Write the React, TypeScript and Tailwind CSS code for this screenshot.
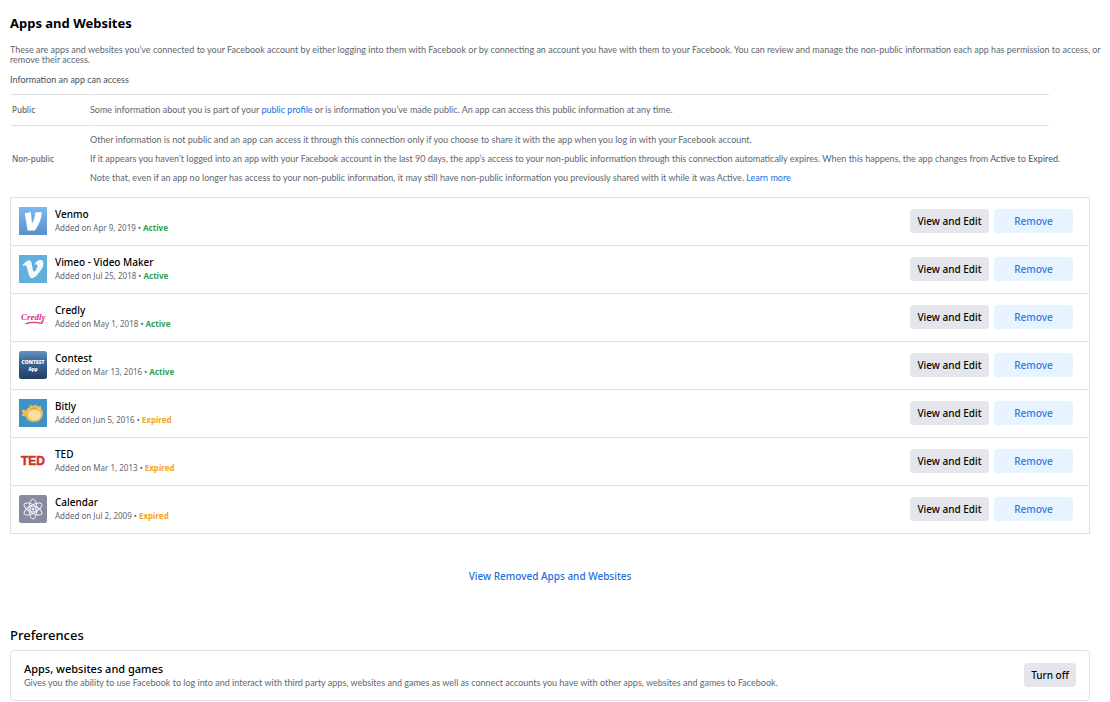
import type { ReactNode } from "react";
import { FaVimeoV } from "react-icons/fa";

interface ConnectedApp {
  name: string;
  added: string;
  status: "Active" | "Expired";
  icon: ReactNode;
}

function VenmoIcon() {
  return (
    <svg viewBox="0 0 28 28" className="size-7" aria-hidden="true">
      <defs>
        <linearGradient id="venmo" x1="0" y1="0" x2="0" y2="1">
          <stop offset="0" stopColor="#7fb8ea" />
          <stop offset="1" stopColor="#5b8fcb" />
        </linearGradient>
      </defs>
      <rect width="28" height="28" fill="url(#venmo)" />
      <path
        d="M5.800 6.200l6-.9c.6 4.500 1 8 1.200 11.200 1.800-3.300 3.100-6.600 3.200-10.300l-.2-.8 6.300-.4c.4 1 .4 2 .2 3.400-.7 4.800-3.300 10.300-6.600 15.100H8.600z"
        fill="#fff"
      />
    </svg>
  );
}

function VimeoIcon() {
  return (
    <span className="flex size-7 items-center justify-center bg-[#62afde]">
      <FaVimeoV className="size-6 text-[#f3f8fb]" />
    </span>
  );
}

function CredlyIcon() {
  return (
    <svg viewBox="0 0 28 28" className="size-7" aria-hidden="true">
      <text
        x="2"
        y="17"
        fontSize="9"
        fontStyle="italic"
        fontWeight="700"
        fontFamily="Liberation Serif, serif"
        fill="#d6357f"
      >
        Credly
      </text>
      <path
        d="M24 17.500c-.3 2.300-1.500 3.300-3 2.600-4-.9-9-1-14 .6"
        stroke="#d6357f"
        strokeWidth="1.300"
        fill="none"
        strokeLinecap="round"
      />
      <circle cx="26" cy="10" r=".5" fill="#e58ab2" />
    </svg>
  );
}

function ContestIcon() {
  return (
    <svg viewBox="0 0 28 28" className="size-7" aria-hidden="true">
      <defs>
        <linearGradient id="contest" x1="0" y1="0" x2="0" y2="1">
          <stop offset="0" stopColor="#6493c4" />
          <stop offset=".3" stopColor="#446f9f" />
          <stop offset="1" stopColor="#233c60" />
        </linearGradient>
      </defs>
      <rect width="28" height="28" rx="2.500" fill="url(#contest)" />
      <g fill="#fff" textAnchor="middle" fontFamily="Open Sans, sans-serif" fontWeight="800">
        <text x="14" y="13" fontSize="5">CONTEST</text>
        <text x="14" y="20" fontSize="4.500">App</text>
      </g>
    </svg>
  );
}

function BitlyIcon() {
  return (
    <svg viewBox="0 0 28 28" className="size-7" aria-hidden="true">
      <rect width="28" height="28" fill="#3d92c6" />
      <path
        d="M2.500 11.200c1.500-1 3-.6 4.500.5 1-2 2.200-3.200 3.800-4L11 5.500l2.200 1.200 2-.2 1.500-1.300 1 1.600 2.200.8 2.300-.6-.2 2.400 1.700 2.600c.7 4-.7 7.800-3.700 9.800-3.500 2-8 1.700-11-.7-1.200-1-2-2.300-2.400-3.800-1.800.2-3.300-.2-4.100-1.300l1.400-1.900z"
        fill="#eebb52"
      />
      <ellipse cx="15.500" cy="16" rx="6.500" ry="5.200" fill="#fbe0a3" />
      <circle cx="10" cy="10.800" r="1" fill="#fff3d8" />
      <circle cx="19.800" cy="9.800" r="1" fill="#fff3d8" />
      <circle cx="10" cy="10.700" r=".5" fill="#8b6425" />
      <circle cx="19.800" cy="9.700" r=".5" fill="#8b6425" />
      <path d="M12 10c1.500-1 3.900-1.200 5.500-.4" stroke="#cf8f2c" strokeWidth=".9" fill="none" />
    </svg>
  );
}

function TedIcon() {
  return (
    <svg viewBox="0 0 28 28" className="size-7" aria-hidden="true">
      <text
        x="14"
        y="18"
        fontSize="12"
        fontWeight="700"
        textAnchor="middle"
        fontFamily="Liberation Sans, sans-serif"
        fill="#d0312f"
        stroke="#d0312f"
        strokeWidth=".5"
      >
        TED
      </text>
    </svg>
  );
}

function CalendarIcon() {
  return (
    <svg viewBox="0 0 28 28" className="size-7" aria-hidden="true">
      <rect width="28" height="28" rx="2" fill="#878b9d" />
      <g fill="none" stroke="#eef0f5" strokeWidth="1">
        <ellipse cx="14" cy="14" rx="4" ry="10" />
        <ellipse cx="14" cy="14" rx="4" ry="10" transform="rotate(60 14 14)" />
        <ellipse cx="14" cy="14" rx="4" ry="10" transform="rotate(120 14 14)" />
        <circle cx="14" cy="14" r="3" />
      </g>
      <circle cx="14" cy="14" r="1.500" fill="#eef0f5" />
    </svg>
  );
}

const apps: ConnectedApp[] = [
  { name: "Venmo", added: "Apr 9, 2019", status: "Active", icon: <VenmoIcon /> },
  { name: "Vimeo - Video Maker", added: "Jul 25, 2018", status: "Active", icon: <VimeoIcon /> },
  { name: "Credly", added: "May 1, 2018", status: "Active", icon: <CredlyIcon /> },
  { name: "Contest", added: "Mar 13, 2016", status: "Active", icon: <ContestIcon /> },
  { name: "Bitly", added: "Jun 5, 2016", status: "Expired", icon: <BitlyIcon /> },
  { name: "TED", added: "Mar 1, 2013", status: "Expired", icon: <TedIcon /> },
  { name: "Calendar", added: "Jul 2, 2009", status: "Expired", icon: <CalendarIcon /> },
];

export default function App() {
  return (
    <main className="bg-white pt-[11px] pr-5 pl-[10px] font-['Noto_Sans',sans-serif] text-[9px] leading-[10px] text-[#606770]">
      <h1 className="text-[13px] leading-6 font-bold text-black">Apps and Websites</h1>
      <p className="-mr-4 mt-[10px] font-['Lato',sans-serif]">
        These are apps and websites you’ve connected to your Facebook account by either logging into them with
        Facebook or by connecting an account you have with them to your Facebook. You can review and manage the
        non-public information each app has permission to access, or remove their access.
      </p>
      <h2 className="mt-[10px] font-['Lato',sans-serif] text-[#4b4f56]">Information an app can access</h2>

      <div className="mt-2 pr-10">
        <table className="w-full table-fixed border-separate border-spacing-px text-left font-['Lato',sans-serif]">
          <tbody>
            <tr>
              <th className="w-[78px] border-t border-[#dddfe2] pl-px font-['Noto_Sans',sans-serif] text-[8px] font-medium">
                Public
              </th>
              <td className="h-[30px] border-t border-[#dddfe2]">
                Some information about you is part of your{" "}
                <a href="#" className="text-[#216fdb]">public profile</a> or is information you’ve made public. An app
                can access this public information at any time.
              </td>
            </tr>
            <tr>
              <th className="border-t border-[#dddfe2] pl-px font-['Noto_Sans',sans-serif] text-[8px] font-medium">
                Non-public
              </th>
              <td className="space-y-[9px] border-t border-[#dddfe2] py-[9px] lg:whitespace-nowrap">
                <p>
                  Other information is not public and an app can access it through this connection only if you choose
                  to share it with the app when you log in with your Facebook account.
                </p>
                <p>
                  If it appears you haven’t logged into an app with your Facebook account in the last 90 days, the
                  app’s access to your non-public information through this connection automatically expires. When this
                  happens, the app changes from <span className="text-[#4b4f56]">Active</span> to{" "}
                  <span className="text-[#4b4f56]">Expired</span>.
                </p>
                <p>
                  Note that, even if an app no longer has access to your non-public information, it may still have
                  non-public information you previously shared with it while it was Active.{" "}
                  <a href="#" className="text-[#216fdb]">Learn more</a>
                </p>
              </td>
            </tr>
          </tbody>
        </table>
      </div>

      <ul className="mt-1 border-x border-t border-[#e0e1e4]">
        {apps.map((app) => (
          <li key={app.name} className="flex items-center gap-2 border-b border-[#e0e1e4] pt-[9px] pr-4 pb-[10px] pl-2">
            {app.icon}
            <div className="flex-1">
              <h3 className="text-[10px] leading-[14px] font-medium text-black">{app.name}</h3>
              <p className="text-[8px] leading-[14px]">
                Added on {app.added} •{" "}
                <span className={`font-bold ${app.status === "Active" ? "text-[#31a24c]" : "text-[#f0a51e]"}`}>
                  {app.status}
                </span>
              </p>
            </div>
            <div className="flex gap-[5px] text-[10px] font-medium">
              <button className="h-6 w-[79px] rounded bg-[#e4e6eb] text-[#050505]">View and Edit</button>
              <button className="h-6 w-[79px] rounded bg-[#e7f3ff] text-[#2a7de1]">Remove</button>
            </div>
          </li>
        ))}
      </ul>

      <div className="mt-9 text-center text-[10px] leading-3">
        <a href="#" className="font-medium text-[#216fdb]">View Removed Apps and Websites</a>
      </div>

      <h2 className="mt-[43px] text-[13px] leading-5 font-medium text-black">Preferences</h2>
      <section className="mt-[5px] flex items-center justify-between rounded border border-[#e0e1e4] px-[13px] pt-[10px] pb-[11px]">
        <div>
          <h3 className="text-[11px] leading-4 font-medium text-black">Apps, websites and games</h3>
          <p className="font-['Lato',sans-serif] leading-3">
            Gives you the ability to use Facebook to log into and interact with third party apps, websites and games as
            well as connect accounts you have with other apps, websites and games to Facebook.
          </p>
        </div>
        <button className="h-6 w-[52px] rounded bg-[#e4e6eb] text-[10px] font-medium text-[#050505]">Turn off</button>
      </section>
    </main>
  );
}
